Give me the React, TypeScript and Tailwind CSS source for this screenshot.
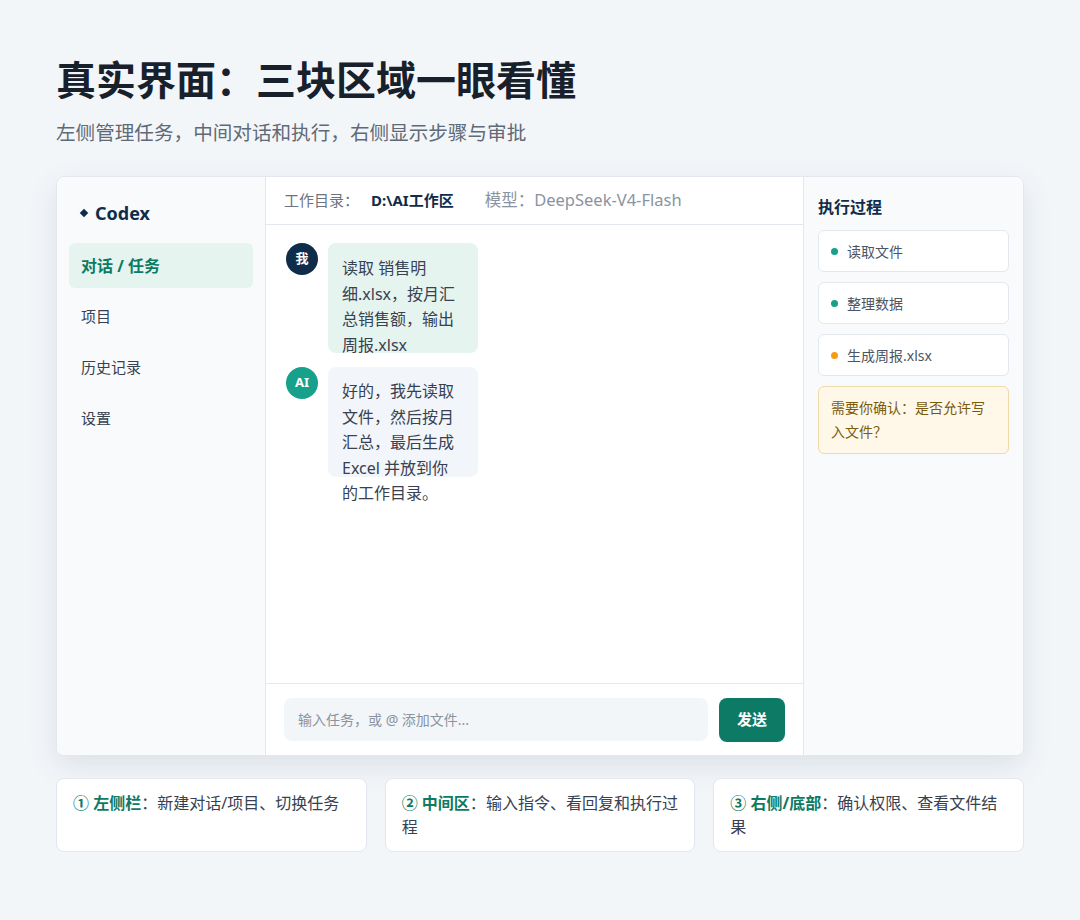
import React from 'react';

const steps = [
    { label: '读取文件', dot: 'bg-[#17a08a]' },
    { label: '整理数据', dot: 'bg-[#17a08a]' },
    { label: '生成周报.xlsx', dot: 'bg-[#f29d12]' },
];

const navItems = ['项目', '历史记录', '设置'];

const notes = [
    { num: '①', title: '左侧栏', text: '新建对话/项目、切换任务' },
    { num: '②', title: '中间区', text: '输入指令、看回复和执行过程' },
    { num: '③', title: '右侧/底部', text: '确认权限、查看文件结果' },
];

export default function App() {
    return (
        <div
            className="min-h-[920px] w-full bg-[#f3f6f9] px-14 pt-[56px] text-[#1f2937]"
            style={{ fontFamily: '"Noto Sans", "Noto Sans CJK SC", sans-serif' }}
        >
            <h1 className="text-[40px] font-bold leading-[48px] text-[#18212b]">真实界面：三块区域一眼看懂</h1>
            <p className="mt-[15px] text-[19.6px] leading-[28px] text-[#5f6a78]">左侧管理任务，中间对话和执行，右侧显示步骤与审批</p>

            <div className="mt-[29px] flex h-[580px] overflow-hidden rounded-lg border border-[#e3e8ee] bg-white shadow-[0_10px_30px_rgba(15,45,74,0.10)]">
                {/* sidebar */}
                <aside className="flex w-[209px] shrink-0 flex-col border-r border-[#e3e8ee] bg-[#f8fafc] px-3 pt-[23px]">
                    <div className="flex h-[26px] items-center gap-2 px-3 text-[18px] font-bold text-[#0f2d4a]">
                        <span className="inline-block h-[6px] w-[6px] rotate-45 bg-[#0f2d4a]" />
                        Codex
                    </div>
                    <div className="mt-[17px] flex flex-col gap-[6px]">
                        <div className="flex h-[45px] items-center rounded-md bg-[#e6f4ef] px-3 text-[16px] font-bold text-[#0d7a64]">对话 / 任务</div>
                        {navItems.map(item => (
                            <div key={item} className="flex h-[45px] items-center px-3 text-[15px] text-[#374151]">{item}</div>
                        ))}
                    </div>
                </aside>

                {/* center */}
                <main className="flex min-w-0 flex-1 flex-col">
                    <div className="flex h-[48px] shrink-0 items-center border-b border-[#e3e8ee] px-[18px] text-[15px]">
                        <span className="text-[#6b7480]">工作目录：</span>
                        <span className="ml-3 font-bold text-[#0f2d4a]">D:\AI工作区</span>
                        <span className="ml-[31px] text-[16.5px] text-[#8a939f]">模型：DeepSeek-V4-Flash</span>
                    </div>

                    <div className="flex flex-1 flex-col gap-[14px] px-5 pt-[18px]">
                        <div className="flex gap-[10px]">
                            <div className="flex h-8 w-8 shrink-0 items-center justify-center rounded-full bg-[#0f2d4a] text-[13px] font-bold text-white">我</div>
                            <div className="h-[110px] w-[150px] rounded-lg bg-[#e6f4ef] px-[14px] pt-[13px] text-[16px] leading-[25.5px] text-[#374151]">
                                读取 销售明细.xlsx，按月汇总销售额，输出周报.xlsx
                            </div>
                        </div>
                        <div className="flex gap-[10px]">
                            <div className="flex h-8 w-8 shrink-0 items-center justify-center rounded-full bg-[#17a08a] text-[13px] font-bold text-white">AI</div>
                            <div className="h-[110px] w-[150px] rounded-lg bg-[#f2f5f9] px-[14px] pt-[12px] text-[16px] leading-[25.5px] text-[#374151]">
                                好的，我先读取文件，然后按月汇总，最后生成 Excel 并放到你的工作目录。
                            </div>
                        </div>
                    </div>

                    <div className="flex h-[72px] shrink-0 items-center gap-[11px] border-t border-[#e3e8ee] px-[18px]">
                        <div className="flex h-[43px] flex-1 items-center rounded-lg bg-[#f3f6f9] px-[14px] text-[14px] text-[#8a939f]">输入任务，或 @ 添加文件...</div>
                        <button className="h-[44px] w-[66px] rounded-lg bg-[#0d7a66] text-[15px] font-bold text-white">发送</button>
                    </div>
                </main>

                {/* right panel */}
                <aside className="flex w-[220px] shrink-0 flex-col border-l border-[#e3e8ee] bg-[#f8fafc] px-[14px] pt-[20px]">
                    <h2 className="text-[16px] font-bold leading-[20px] text-[#0f2d4a]">执行过程</h2>
                    <div className="mt-[13px] flex flex-col gap-[10px]">
                        {steps.map(step => (
                            <div key={step.label} className="flex h-[42px] items-center gap-[9px] rounded-md border border-[#e3e8ee] bg-white px-3 text-[14px] text-[#4b5563]">
                                <span className={`h-[7px] w-[7px] rounded-full ${step.dot}`} />
                                {step.label}
                            </div>
                        ))}
                        <div className="rounded-md border border-[#f0d9a8] bg-[#fff7e8] px-3 py-[9px] text-[14px] leading-[24px] text-[#7a5b0c]">
                            需要你确认：是否允许写入文件？
                        </div>
                    </div>
                </aside>
            </div>

            <div className="mt-[22px] grid grid-cols-3 gap-[18px]">
                {notes.map(note => (
                    <p key={note.num} className="h-[74px] rounded-lg border border-[#e3e8ee] bg-white px-4 pt-[12px] text-[16px] leading-[24px] text-[#374151]">
                        <span className="font-bold text-[#0d7a64]">{note.num} {note.title}</span>：{note.text}
                    </p>
                ))}
            </div>
        </div>
    );
}
